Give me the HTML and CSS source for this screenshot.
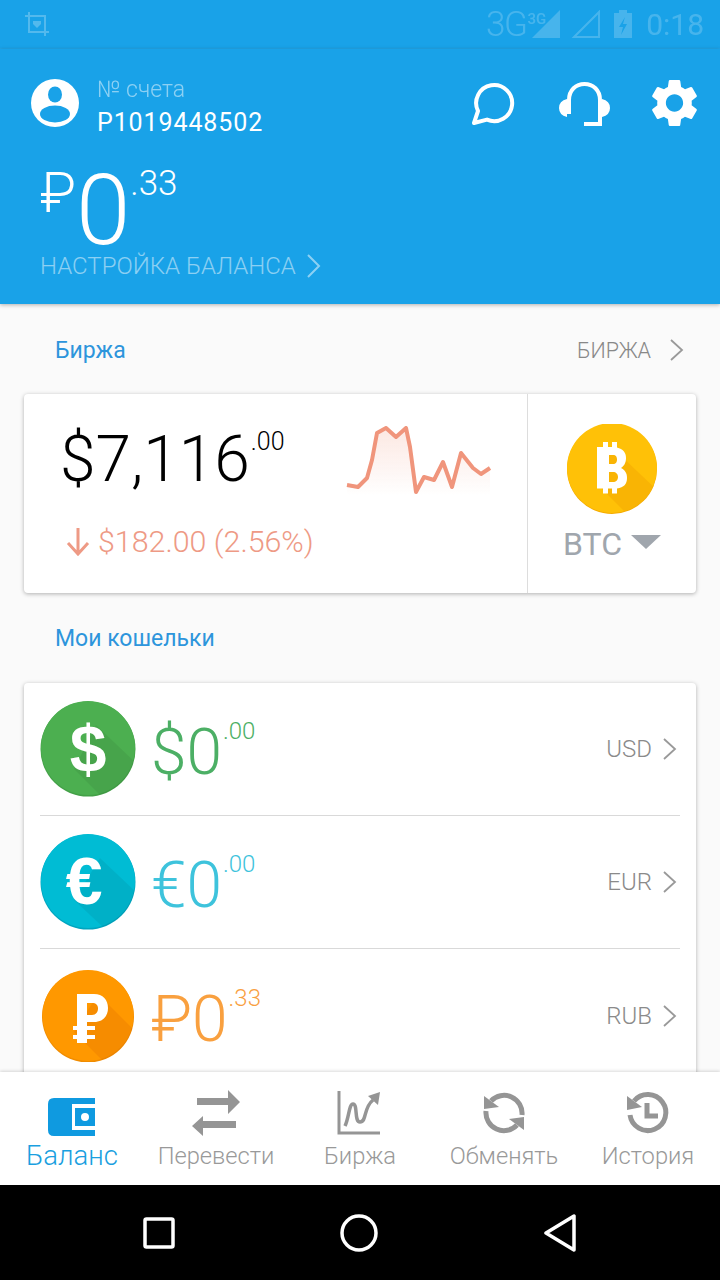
FILE: index.html
```html
<!DOCTYPE html>
<html lang="ru">
<head>
  <meta charset="UTF-8" />
  <meta name="viewport" content="width=device-width, initial-scale=1.0" />
  <title>Баланс</title>
  <link rel="stylesheet" href="styles.css">
</head>
<body>
  <div class="screen">
    <div class="status-bar">
      <svg class="status-shot" width="24" height="24" viewBox="0 0 24 24" fill="none" stroke="#fff" stroke-width="2">
        <path d="M4 0V20H24M0 4H20V24"/>
        <path d="M8 9h8v3l-4 4-4-4z" fill="#fff" stroke="none"/>
      </svg>
      <div class="status-right">
        <span class="status-net">3G</span>
        <span class="status-net-small">3G</span>
        <svg width="30" height="28" viewBox="0 0 30 28"><path d="M28 0V28H0z" fill="#fff"/></svg>
        <svg class="status-sim" width="30" height="28" viewBox="0 0 30 28" fill="none" stroke="#fff" stroke-width="2"><path d="M28 2V27H3z"/></svg>
        <svg class="status-batt" width="18" height="28" viewBox="0 0 18 28"><path d="M5 0h8v3h5v25H0V3h5z" fill="#fff"/><path d="M11 7l-6 10h4l-2 8 6-11H9z" fill="#19a2e8"/></svg>
        <span class="status-time">0:18</span>
      </div>
    </div>

    <header class="account">
      <div class="account-top">
        <svg class="avatar" width="48" height="48" viewBox="0 0 48 48">
          <circle cx="24" cy="24" r="24" fill="#fff"/>
          <ellipse cx="24" cy="15.500" rx="7" ry="8" fill="#19a2e8"/>
          <ellipse cx="24" cy="35" rx="15" ry="8.500" fill="#19a2e8"/>
        </svg>
        <div class="account-id">
          <div class="account-label">№ счета</div>
          <div class="account-number">P1019448502</div>
        </div>
        <div class="account-actions">
          <svg width="44" height="44" viewBox="0 0 44 44" fill="none" stroke="#fff" stroke-width="4" stroke-linejoin="round">
            <path d="M3 41L7 29A18 18 0 1 1 16 37.600Z"/>
          </svg>
          <svg width="52" height="44" viewBox="0 0 52 44">
            <path d="M10 32V18C10 8 17 2 25.500 2S41 8 41 18V42H25" fill="none" stroke="#fff" stroke-width="4"/>
            <path d="M8 17Q0 19 0 26T8 35zM43 17Q51 19 51 26T43 35z" fill="#fff"/>
          </svg>
          <svg class="gear" width="47" height="48" viewBox="2.500 2 19 20">
            <path fill="#fff" d="M19.140 12.940c.04-.3.06-.61.06-.94 0-.32-.02-.64-.07-.94l2.030-1.580c.18-.14.23-.41.12-.61l-1.920-3.320c-.12-.22-.37-.29-.59-.22l-2.390.96c-.5-.38-1.030-.7-1.620-.94l-.36-2.540c-.04-.24-.24-.41-.48-.41h-3.840c-.24 0-.43.17-.47.41l-.36 2.540c-.59.24-1.130.57-1.620.94l-2.390-.96c-.22-.08-.47 0-.59.22L2.740 8.870c-.12.21-.08.47.12.61l2.030 1.580c-.05.3-.09.63-.09.94s.02.64.07.94l-2.030 1.580c-.18.14-.23.41-.12.61l1.920 3.320c.12.22.37.29.59.22l2.390-.96c.5.38 1.030.7 1.620.94l.36 2.540c.05.24.24.41.48.41h3.840c.24 0 .44-.17.47-.41l.36-2.540c.59-.24 1.130-.56 1.620-.94l2.390.96c.22.08.47 0 .59-.22l1.920-3.320c.12-.22.07-.47-.12-.61l-2.010-1.580zM12 15.600c-1.980 0-3.600-1.620-3.600-3.600s1.620-3.600 3.600-3.600 3.600 1.620 3.600 3.600-1.620 3.600-3.600 3.600z"/>
          </svg>
        </div>
      </div>
      <div class="balance">
        <span class="balance-cur">₽</span><span class="balance-int">0</span><span class="balance-dec">.33</span>
      </div>
      <div class="balance-link">
        НАСТРОЙКА БАЛАНСА
        <svg width="15" height="26" viewBox="0 0 15 26" fill="none" stroke="#fff" stroke-width="2"><path d="M2 2l11 11L2 24"/></svg>
      </div>
    </header>

    <main class="content">
      <div class="section-head section-head-first">
        <span class="section-title">Биржа</span>
        <span class="section-more">БИРЖА
          <svg width="15" height="24" viewBox="0 0 15 24" fill="none" stroke="#999" stroke-width="1.800"><path d="M2 2l11 10L2 22"/></svg>
        </span>
      </div>

      <div class="card market">
        <div class="market-main">
          <div class="market-info">
            <div class="market-price">$7,116<span class="market-dec">.00</span></div>
            <div class="market-change">
              <svg width="24" height="28" viewBox="0 0 24 28" fill="none" stroke="#ee9a85" stroke-width="3"><path d="M12 0V26M2 15l10 11 10-11"/></svg>
              $182.00 (2.56%)
            </div>
          </div>
          <svg class="market-chart" width="160" height="80" viewBox="340 420 160 80">
            <defs>
              <linearGradient id="chartFill" x1="0" y1="0" x2="0" y2="1">
                <stop offset="0" stop-color="#f0957c" stop-opacity=".22"/>
                <stop offset="1" stop-color="#f0957c" stop-opacity="0"/>
              </linearGradient>
            </defs>
            <path d="M347 485L358 487 367 478 372 460 377 433 386 428 396 437 406 428 410 447 416 492 424 477 434 480 443 462 452 487 461 453 473 468 481 474 490 468V496H347Z" fill="url(#chartFill)"/>
            <path d="M347 485L358 487 367 478 372 460 377 433 386 428 396 437 406 428 410 447 416 492 424 477 434 480 443 462 452 487 461 453 473 468 481 474 490 468" fill="none" stroke="#f0957c" stroke-width="4" stroke-linejoin="round"/>
          </svg>
        </div>
        <div class="market-coin">
          <svg width="90" height="90" viewBox="0 0 90 90">
            <clipPath id="btcClip"><circle cx="45" cy="44" r="45"/></clipPath>
            <circle cx="45" cy="45" r="45" fill="#f5ab00"/>
            <circle cx="45" cy="44" r="45" fill="#ffc107"/>
            <path d="M36 30H52L90 66V90H60L30 60z" fill="#ee9d00" opacity=".35" clip-path="url(#btcClip)"/>
            <path fill="#fff" fill-rule="evenodd" d="M36 18h5v5h4v-5h5v5.500c6 1.500 9 5 9 10.500 0 5-2 8-5 10 4 2 6 5 6 10 0 6-3 9.500-10 10.500v5h-5v-5h-4v5h-5v-5h-6V23h6zM42 31v9h4c3 0 4-2 4-4.500S49 31 46 31zM42 48v10h4c3 0 5-2 5-5s-2-5-5-5z"/>
          </svg>
          <div class="market-symbol">BTC <span class="caret"></span></div>
        </div>
      </div>

      <div class="section-head">
        <span class="section-title">Мои кошельки</span>
      </div>

      <div class="card wallets">
        <div class="wallet-row">
          <svg class="coin" width="96" height="96" viewBox="0 0 96 96">
            <clipPath id="usdClip"><circle cx="48" cy="47.500" r="47.500"/></clipPath>
            <circle cx="48" cy="48" r="47.500" fill="#43a047"/>
            <circle cx="48" cy="47" r="47" fill="#4caf50"/>
            <path d="M56 24L96 62V96H62L34 68z" fill="#000" opacity=".06" clip-path="url(#usdClip)"/>
            <text class="coin-glyph" x="48" y="71" font-size="66">$</text>
          </svg>
          <div class="amount amount-usd"><span class="amount-int">$0</span><span class="amount-dec">.00</span></div>
          <div class="wallet-code">USD
            <svg width="15" height="24" viewBox="0 0 15 24" fill="none" stroke="#999" stroke-width="1.800"><path d="M2 2l11 10L2 22"/></svg>
          </div>
        </div>
        <div class="wallet-row">
          <svg class="coin" width="96" height="96" viewBox="0 0 96 96">
            <clipPath id="eurClip"><circle cx="48" cy="47.500" r="47.500"/></clipPath>
            <circle cx="48" cy="48" r="47.500" fill="#00a5bf"/>
            <circle cx="48" cy="47" r="47" fill="#00bcd4"/>
            <path d="M60 24L96 58V96H66L34 66z" fill="#000" opacity=".06" clip-path="url(#eurClip)"/>
            <text class="coin-glyph" x="44" y="70" font-size="66">€</text>
          </svg>
          <div class="amount amount-eur"><span class="amount-int">€0</span><span class="amount-dec">.00</span></div>
          <div class="wallet-code">EUR
            <svg width="15" height="24" viewBox="0 0 15 24" fill="none" stroke="#999" stroke-width="1.800"><path d="M2 2l11 10L2 22"/></svg>
          </div>
        </div>
        <div class="wallet-row wallet-row-last">
          <svg class="coin coin-rub" width="92" height="92" viewBox="0 0 92 92">
            <clipPath id="rubClip"><circle cx="46" cy="46" r="46"/></clipPath>
            <circle cx="46" cy="46.500" r="46" fill="#f08c00"/>
            <circle cx="46" cy="45.500" r="45.500" fill="#ff9800"/>
            <path d="M56 24L92 60V92H62L32 62z" fill="#c85000" opacity=".16" clip-path="url(#rubClip)"/>
            <path fill="#fff" fill-rule="evenodd" d="M35 24H52C61 24 66 30 66 38S61 52 52 52H45V56H53V60H45V65H53V69H45V73H35V69H31V65H35V60H31V56H35ZM45 33V45H50C54 45 56 42 56 38.500S54 33 50 33Z"/>
          </svg>
          <div class="amount amount-rub"><span class="amount-int">₽0</span><span class="amount-dec">.33</span></div>
          <div class="wallet-code">RUB
            <svg width="15" height="24" viewBox="0 0 15 24" fill="none" stroke="#999" stroke-width="1.800"><path d="M2 2l11 10L2 22"/></svg>
          </div>
        </div>
      </div>
    </main>

    <nav class="tabs">
      <div class="tab tab-active">
        <svg width="48" height="38" viewBox="0 0 48 38" fill="#0f9ae0">
          <path d="M6 0H47V6H24V32H47V38H6Q0 38 0 32V6Q0 0 6 0Z"/>
          <path fill-rule="evenodd" d="M27 10H47V28H27ZM37 15a4 4 0 1 0 0 8 4 4 0 0 0 0-8Z"/>
        </svg>
        <span>Баланс</span>
      </div>
      <div class="tab">
        <svg width="50" height="46" viewBox="0 0 50 46" fill="#959595">
          <path d="M6 8H37V0L49 12 37 24V15H6Z"/>
          <path d="M45 31H12V26L1 36 12 46V38H45Z"/>
        </svg>
        <span>Перевести</span>
      </div>
      <div class="tab">
        <svg width="46" height="46" viewBox="0 0 46 46" fill="none" stroke="#959595" stroke-width="3">
          <path d="M2 1V43H43"/>
          <path d="M8 36C12 28 12 14 16 14C21 14 17 32 23 32C30 32 26 18 36 10" stroke-width="3.500"/>
          <path d="M31 6L43 2 41 15Z" fill="#959595" stroke="none"/>
        </svg>
        <span>Биржа</span>
      </div>
      <div class="tab">
        <svg width="46" height="46" viewBox="0 0 46 46" fill="none" stroke="#959595" stroke-width="5">
          <path d="M41 25A18 18 0 0 0 10 11"/>
          <path d="M5 21A18 18 0 0 0 36 35"/>
          <path d="M3 6L18 17 3 19Z" fill="#959595" stroke="none"/>
          <path d="M43 40L28 29 43 27Z" fill="#959595" stroke="none"/>
        </svg>
        <span>Обменять</span>
      </div>
      <div class="tab">
        <svg width="46" height="46" viewBox="0 0 46 46" fill="none" stroke="#959595" stroke-width="5">
          <path d="M9 11A18 18 0 1 1 5 25"/>
          <path d="M2 6L17 17 2 20Z" fill="#959595" stroke="none"/>
          <path d="M22 13V26H33"/>
        </svg>
        <span>История</span>
      </div>
    </nav>

    <div class="system-bar">
      <svg width="32" height="32" viewBox="0 0 32 32" fill="none" stroke="#fff" stroke-width="3.500"><rect x="2" y="2" width="28" height="28" rx="1.500"/></svg>
      <svg width="38" height="38" viewBox="0 0 38 38" fill="none" stroke="#fff" stroke-width="3.500"><circle cx="19" cy="19" r="17"/></svg>
      <svg width="34" height="38" viewBox="0 0 34 38" fill="none" stroke="#fff" stroke-width="3.500" stroke-linejoin="round"><path d="M31 2V36L3 19Z"/></svg>
    </div>
  </div>
</body>
</html>
```

FILE: styles.css
```css
:root {
  --blue: #19a2e8;
  --title-blue: #2d95dc;
  --grey: #999;
}

* {
  box-sizing: border-box;
}

body {
  margin: 0;
  background: #fafafa;
  font-family: 'Roboto', sans-serif;
  color: #000;
}

.screen {
  display: flex;
  flex-direction: column;
  width: 720px;
  height: 1280px;
  overflow: hidden;
}

/* status bar */
.status-bar {
  display: flex;
  align-items: center;
  justify-content: space-between;
  flex: none;
  height: 49px;
  padding: 0 16px 0 25px;
  background: var(--blue);
  border-bottom: 1px solid rgba(255, 255, 255, 0.04);
}

.status-shot {
  opacity: 0.25;
}

.status-right {
  display: flex;
  align-items: center;
  color: #fff;
}

.status-right > * {
  opacity: 0.2;
}

.status-net {
  font-size: 35px;
  font-weight: 300;
  letter-spacing: -1.500px;
}

.status-net-small {
  align-self: flex-start;
  margin: 6px -14px 0 1px;
  font-size: 15px;
  font-weight: 500;
}

.status-sim {
  margin-left: 9px;
}

.status-batt {
  margin-left: 13px;
}

.status-time {
  margin-left: 14px;
  font-size: 30px;
}

/* account header */
.account {
  position: relative;
  flex: none;
  height: 255px;
  padding: 30px 22px 0 31px;
  background: var(--blue);
  color: #fff;
  box-shadow: 0 1px 4px rgba(0, 0, 0, 0.3);
}

.account-top {
  display: flex;
  align-items: flex-start;
}

.account-id {
  margin: -5px 0 0 18px;
}

.account-label {
  font-size: 23px;
  font-weight: 300;
  line-height: 32px;
  opacity: 0.5;
}

.account-number {
  font-size: 25px;
  line-height: 33px;
  letter-spacing: 0.900px;
}

.account-actions {
  display: flex;
  align-items: flex-start;
  gap: 44px;
  margin: 3px 0 0 auto;
}

.gear {
  margin: -3px 0 0 -4px;
}

.balance {
  display: flex;
  align-items: flex-start;
  height: 101px;
  margin: 0 0 0 9px;
  font-weight: 300;
}

.balance-cur {
  margin-top: 24px;
  font-size: 56px;
  line-height: 60px;
}

.balance-int {
  margin-top: 34px;
  font-size: 98px;
  line-height: 76px;
}

.balance-dec {
  margin-top: 22px;
  font-size: 35px;
  line-height: 46px;
}

.balance-link {
  display: flex;
  align-items: center;
  gap: 10px;
  margin: 9px 0 0 9px;
  font-size: 24px;
  font-weight: 300;
  line-height: 34px;
  color: rgba(255, 255, 255, 0.5);
}

.balance-link svg {
  opacity: 0.5;
}

/* content */
.content {
  flex: 1;
  min-height: 0;
  overflow: hidden;
}

.section-head {
  display: flex;
  align-items: center;
  justify-content: space-between;
  height: 90px;
  padding: 21px 36px 21px 55px;
}

.section-head-first {
  padding: 22px 36px 20px 55px;
}

.section-title {
  font-size: 23px;
  color: var(--title-blue);
}

.section-more {
  display: flex;
  align-items: center;
  gap: 18px;
  font-size: 21.500px;
  font-weight: 300;
  color: #888;
}

.card {
  margin: 0 24px;
  background: #fff;
  border-radius: 4px;
  box-shadow: 0 1px 4px rgba(0, 0, 0, 0.3);
}

.market {
  display: flex;
  height: 199px;
}

.market-main {
  display: flex;
  flex: 1;
  padding: 26px 27px 0 36px;
  border-right: 1px solid #ddd;
}

.market-info {
  flex: 1;
}

.market-price {
  display: flex;
  align-items: flex-start;
  font-size: 64px;
  font-weight: 300;
  line-height: 80px;
}

.market-dec {
  margin: 6px 0 0 1px;
  font-size: 25px;
  line-height: 32px;
}

.market-change {
  display: flex;
  align-items: center;
  gap: 8px;
  margin: 22px 0 0 6px;
  font-size: 30.400px;
  font-weight: 300;
  line-height: 40px;
  color: #ee9a85;
}

.market-chart {
  flex: none;
  filter: blur(0.6px);
}

.market-coin {
  display: flex;
  flex-direction: column;
  align-items: center;
  width: 168px;
  padding-top: 30px;
}

.market-symbol {
  display: flex;
  align-items: center;
  margin-top: 9px;
  font-size: 32px;
  line-height: 42px;
  color: #a0a6ad;
}

.caret {
  width: 0;
  height: 0;
  margin: -4px 0 0 9px;
  border-top: 14px solid #a0a6ad;
  border-left: 15px solid transparent;
  border-right: 15px solid transparent;
}

/* wallets */
.wallet-row {
  display: flex;
  align-items: center;
  height: 133px;
  margin: 0 16px;
  border-bottom: 1px solid #d9d9d9;
}

.wallet-row-last {
  border-bottom: none;
}

.coin {
  flex: none;
}

.coin-rub {
  margin: 0 2px;
}

.coin-glyph {
  font-family: 'Liberation Sans', sans-serif;
  font-weight: bold;
  text-anchor: middle;
  fill: #fff;
}

.amount {
  display: flex;
  align-items: flex-start;
  margin-left: 15px;
  font-weight: 300;
}

.amount-int {
  margin-top: 8px;
  font-size: 64px;
  line-height: 80px;
}

.amount-dec {
  margin: 10px 0 0 1px;
  font-size: 24px;
  line-height: 32px;
}

.amount-usd {
  color: #4caf65;
}

.amount-eur {
  color: #3ec3dc;
}

.amount-rub {
  color: #f9a03f;
}

.wallet-code {
  display: flex;
  align-items: center;
  gap: 10px;
  margin: 0 3px 0 auto;
  font-size: 24px;
  font-weight: 300;
  color: #8a8a8a;
}

/* bottom navigation */
.tabs {
  position: relative;
  display: flex;
  flex: none;
  height: 113px;
  background: #fff;
  box-shadow: 0 -1px 3px rgba(0, 0, 0, 0.15);
}

.tab {
  display: flex;
  flex-direction: column;
  align-items: center;
  justify-content: flex-end;
  flex: 1;
  gap: 2px;
  padding-bottom: 11px;
  font-size: 23.700px;
  font-weight: 300;
  line-height: 36px;
  color: var(--grey);
}

.tab-active {
  font-size: 27.500px;
  color: #1a9fe0;
}

.system-bar {
  display: flex;
  align-items: center;
  justify-content: center;
  gap: 165px;
  flex: none;
  height: 95px;
  background: #000;
}
```
